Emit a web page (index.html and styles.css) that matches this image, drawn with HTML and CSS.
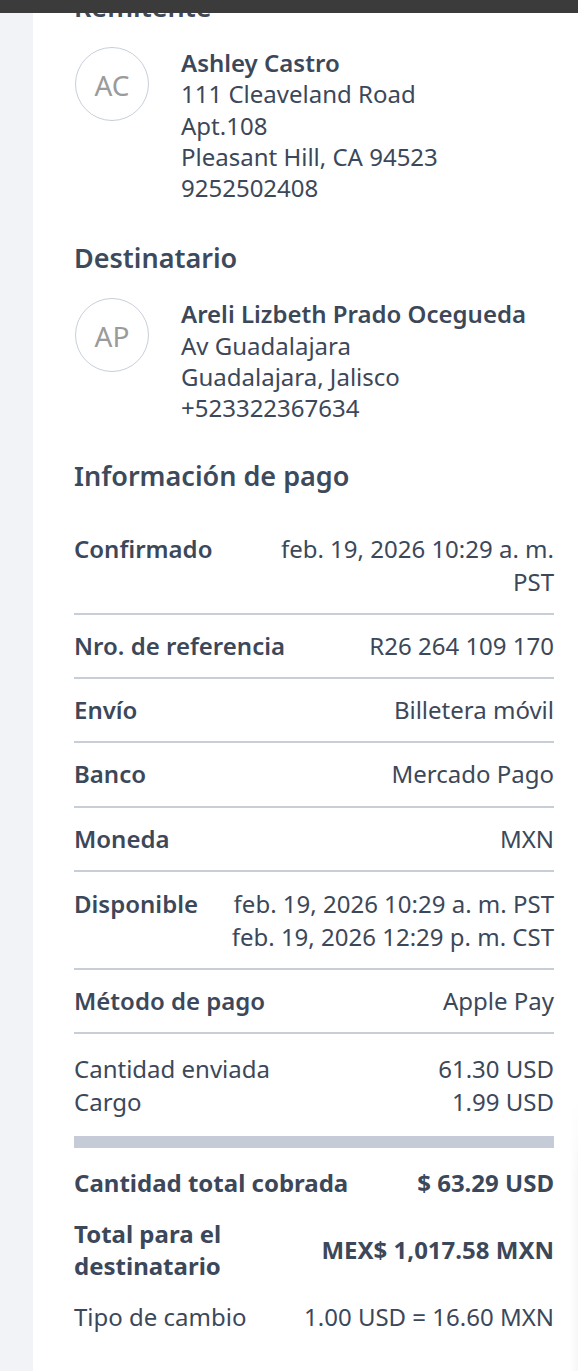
FILE: index.html
```html
<!DOCTYPE html>
<html lang="es">
<head>
<meta charset="utf-8">
<title>Detalles de la transferencia</title>
<link rel="stylesheet" href="styles.css">
</head>
<body>
<div class="topbar"></div>
<div class="page">
  <div class="rail"></div>
  <main class="main">
    <h2 class="section-title">Remitente</h2>
    <div class="contact">
      <div class="avatar">AC</div>
      <div class="contact-info">
        <div class="contact-name">Ashley Castro</div>
        <div>111 Cleaveland Road</div>
        <div>Apt.108</div>
        <div>Pleasant Hill, CA 94523</div>
        <div>9252502408</div>
      </div>
    </div>

    <h2 class="section-title gap-top">Destinatario</h2>
    <div class="contact">
      <div class="avatar">AP</div>
      <div class="contact-info">
        <div class="contact-name">Areli Lizbeth Prado Ocegueda</div>
        <div>Av Guadalajara</div>
        <div>Guadalajara, Jalisco</div>
        <div>+523322367634</div>
      </div>
    </div>

    <h2 class="section-title gap-top-info">Información de pago</h2>
    <div class="details">
      <div class="row row-tall">
        <div class="label">Confirmado</div>
        <div class="value">feb. 19, 2026 10:29 a. m.<br>PST</div>
      </div>
      <div class="row">
        <div class="label">Nro. de referencia</div>
        <div class="value">R26 264 109 170</div>
      </div>
      <div class="row">
        <div class="label">Envío</div>
        <div class="value">Billetera móvil</div>
      </div>
      <div class="row">
        <div class="label">Banco</div>
        <div class="value">Mercado Pago</div>
      </div>
      <div class="row">
        <div class="label">Moneda</div>
        <div class="value">MXN</div>
      </div>
      <div class="row row-tall">
        <div class="label">Disponible</div>
        <div class="value nowrap">feb. 19, 2026 10:29 a. m. PST<br>feb. 19, 2026 12:29 p. m. CST</div>
      </div>
      <div class="row">
        <div class="label">Método de pago</div>
        <div class="value">Apple Pay</div>
      </div>
    </div>

    <div class="amounts">
      <div class="amount-line"><span>Cantidad enviada</span><span>61.30 USD</span></div>
      <div class="amount-line"><span>Cargo</span><span>1.99 USD</span></div>
    </div>
    <div class="thick-rule"></div>

    <div class="totals">
      <div class="total-line strong">
        <div class="total-label">Cantidad total cobrada</div>
        <div class="total-value">$ 63.29 USD</div>
      </div>
      <div class="total-line strong">
        <div class="total-label">Total para el destinatario</div>
        <div class="total-value">MEX$ 1,017.58 MXN</div>
      </div>
      <div class="total-line">
        <div class="total-label">Tipo de cambio</div>
        <div class="total-value">1.00 USD = 16.60 MXN</div>
      </div>
    </div>
  </main>
</div>
<div class="edge-shade"></div>
</body>
</html>
```

FILE: styles.css
```css
html, body {
  margin: 0;
  padding: 0;
  background: #ffffff;
}

body {
  font-family: "Noto Sans", "Open Sans", "DejaVu Sans", sans-serif;
  font-size: 24px;
  color: #3c4859;
  overflow: hidden;
  position: relative;
  min-height: 100vh;
}

.topbar {
  position: fixed;
  top: 0;
  left: 0;
  right: 0;
  height: 13px;
  background: #3b3b3b;
  z-index: 10;
}

.page {
  display: flex;
  min-height: 100vh;
}

.rail {
  width: 33px;
  flex: 0 0 33px;
  background: #f2f3f6;
}

.main {
  flex: 1;
  margin-top: -9px;
  padding: 0 24px 40px 41px;
}

.section-title {
  margin: 0;
  font-size: 27px;
  font-weight: 600;
  line-height: 32px;
  color: #3d4a5c;
}

.gap-top {
  margin-top: 39px;
}

.gap-top-info {
  margin-top: 37px;
}

.contact {
  display: flex;
  align-items: flex-start;
  gap: 32px;
  margin-top: 24px;
}

.avatar {
  width: 72px;
  height: 70px;
  flex: 0 0 72px;
  border: 1.5px solid #c8cfdb;
  border-radius: 50%;
  display: flex;
  align-items: center;
  justify-content: center;
  color: #9b9b9b;
  font-size: 28px;
  padding-top: 2px;
  box-sizing: content-box;
  margin-left: 1px;
}

.contact-info {
  line-height: 31.25px;
}

.contact-name {
  font-weight: 600;
}

.details {
  margin-top: 25px;
}

.row {
  display: flex;
  justify-content: space-between;
  align-items: flex-start;
  gap: 24px;
  padding: 15px 0;
  border-bottom: 2px solid #c8ced8;
  line-height: 32.1px;
}

.row-tall {
  line-height: 33px;
}

.label {
  font-weight: 600;
  white-space: nowrap;
}

.value {
  text-align: right;
}

.nowrap {
  white-space: nowrap;
}

.amounts {
  padding: 18px 0;
  line-height: 33px;
}

.amount-line {
  display: flex;
  justify-content: space-between;
}

.thick-rule {
  height: 12px;
  background: #c5ccd8;
}

.totals {
  display: flex;
  flex-direction: column;
  gap: 19px;
  margin-top: 19px;
  line-height: 32px;
}

.total-line {
  display: flex;
  justify-content: space-between;
  align-items: center;
  gap: 20px;
}

.total-line.strong {
  font-weight: 700;
}

.total-value {
  white-space: nowrap;
  text-align: right;
}

.edge-shade {
  position: absolute;
  right: 0;
  top: 1100px;
  bottom: 0;
  width: 9px;
  background: linear-gradient(to right, rgba(0, 0, 0, 0) 0%, rgba(0, 0, 0, 0.03) 100%);
  -webkit-mask-image: linear-gradient(to bottom, transparent 0, #000 80px);
  mask-image: linear-gradient(to bottom, transparent 0, #000 80px);
  pointer-events: none;
}
```
